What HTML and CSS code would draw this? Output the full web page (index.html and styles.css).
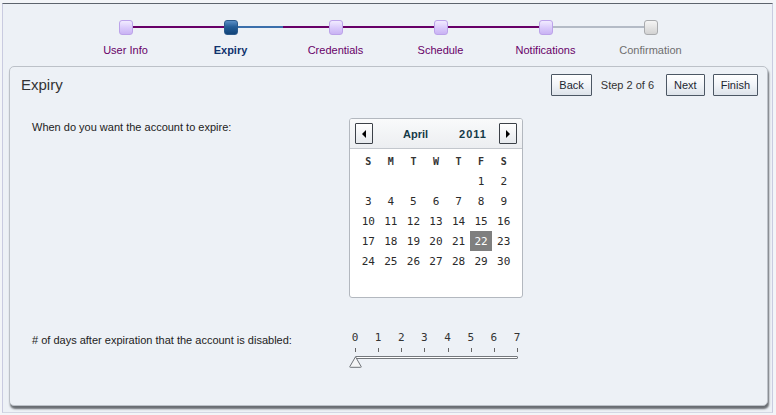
FILE: index.html
```html
<!DOCTYPE html>
<html lang="en">
<head>
<meta charset="utf-8">
<title>Expiry</title>
<link rel="stylesheet" href="styles.css">
</head>
<body>
<div class="frame">
  <ol class="train">
    <li class="step visited rc-purple"><span class="marker"></span><span class="label">User Info</span></li>
    <li class="step current lc-purple rc-blue"><span class="marker"></span><span class="label">Expiry</span></li>
    <li class="step visited lc-purple rc-purple"><span class="marker"></span><span class="label">Credentials</span></li>
    <li class="step visited lc-purple rc-purple"><span class="marker"></span><span class="label">Schedule</span></li>
    <li class="step visited lc-purple rc-gray"><span class="marker"></span><span class="label">Notifications</span></li>
    <li class="step disabled lc-gray"><span class="marker"></span><span class="label">Confirmation</span></li>
  </ol>

  <section class="panel">
    <header class="panel-head">
      <h1 class="panel-title">Expiry</h1>
      <div class="nav">
        <button class="btn" type="button">Back</button>
        <span class="step-count">Step 2 of 6</span>
        <button class="btn" type="button">Next</button>
        <button class="btn" type="button">Finish</button>
      </div>
    </header>

    <div class="form">
      <div class="row">
        <label class="prompt">When do you want the account to expire:</label>
        <div class="calendar">
          <div class="cal-head">
            <button class="cal-btn" type="button" aria-label="Previous month">
              <svg width="6" height="8" viewBox="0 0 6 8"><polygon points="5,0 5,8 1,4" fill="#000"/></svg>
            </button>
            <span class="cal-month">April</span>
            <span class="cal-year">2011</span>
            <button class="cal-btn cal-next" type="button" aria-label="Next month">
              <svg width="6" height="8" viewBox="0 0 6 8"><polygon points="1,0 1,8 5,4" fill="#000"/></svg>
            </button>
          </div>
          <div class="cal-grid">
            <span class="dow">S</span><span class="dow">M</span><span class="dow">T</span><span class="dow">W</span><span class="dow">T</span><span class="dow">F</span><span class="dow">S</span>
            <span></span><span></span><span></span><span></span><span></span><span class="day">1</span><span class="day">2</span>
            <span class="day">3</span><span class="day">4</span><span class="day">5</span><span class="day">6</span><span class="day">7</span><span class="day">8</span><span class="day">9</span>
            <span class="day">10</span><span class="day">11</span><span class="day">12</span><span class="day">13</span><span class="day">14</span><span class="day">15</span><span class="day">16</span>
            <span class="day">17</span><span class="day">18</span><span class="day">19</span><span class="day">20</span><span class="day">21</span><span class="day selected">22</span><span class="day">23</span>
            <span class="day">24</span><span class="day">25</span><span class="day">26</span><span class="day">27</span><span class="day">28</span><span class="day">29</span><span class="day">30</span>
          </div>
        </div>
      </div>

      <div class="row row-slider">
        <label class="prompt prompt-slider"># of days after expiration that the account is disabled:</label>
        <div class="slider">
          <div class="scale">
            <span>0</span><span>1</span><span>2</span><span>3</span><span>4</span><span>5</span><span>6</span><span>7</span>
          </div>
          <div class="ticks">
            <span></span><span></span><span></span><span></span><span></span><span></span><span></span><span></span>
          </div>
          <div class="track-area">
            <div class="track"></div>
            <svg class="thumb" width="13" height="12" viewBox="0 0 13 12"><path d="M6.5 0.8 L12.2 10.6 Q12.5 11.3 11.6 11.3 L1.4 11.3 Q0.5 11.3 0.8 10.6 Z" fill="#f4f5f6" stroke="#6f7378" stroke-width="1"/></svg>
          </div>
        </div>
      </div>
    </div>
  </section>
</div>
</body>
</html>
```

FILE: styles.css
```css
* { box-sizing: border-box; }

html, body {
  margin: 0;
  padding: 0;
  background: #f3f5f8;
}

body {
  padding: 3px 0 0 2px;
  font-family: "Liberation Sans", Arial, sans-serif;
  font-size: 11px;
  color: #222;
}

.frame {
  width: 771px;
  height: 410px;
  background: #edf1f6;
  border-top: 1px solid #5d646d;
  border-left: 1px solid #c9cbe0;
  border-right: 1px solid #c9cbe0;
  border-bottom: 1px solid #d3d7e4;
}

/* ---------- train ---------- */
.train {
  list-style: none;
  margin: 0;
  padding: 16px 0 0 70px;
  display: grid;
  grid-template-columns: repeat(6, 105px);
  height: 62px;
}

.step {
  position: relative;
  display: flex;
  flex-direction: column;
  align-items: center;
}

.step::before,
.step::after {
  content: "";
  position: absolute;
  top: 6px;
  height: 2px;
  width: 50%;
}
.step::before { left: 0; background: var(--lc, transparent); }
.step::after { left: 50%; background: var(--rc, transparent); }

.lc-purple { --lc: #680068; }
.rc-purple { --rc: #680068; }
.rc-blue { --rc: #3b6fab; }
.lc-gray { --lc: #b4bbc6; }
.rc-gray { --rc: #b4bbc6; }

.marker {
  position: relative;
  z-index: 1;
  width: 14px;
  height: 15px;
  border-radius: 3px;
  margin-bottom: 8px;
}

.visited .marker {
  border: 1px solid #bca3ea;
  background: linear-gradient(#f1ebff, #d9c9fb 55%, #c9b3f3);
}
.current .marker {
  border: 1px solid #2c5a8c;
  background: linear-gradient(#5b8fc6, #245d98 45%, #124479);
}
.disabled .marker {
  border: 1px solid #a9abae;
  background: linear-gradient(#f5f5f5, #e0e0e0 60%, #d2d2d2);
}

.label {
  font-size: 11px;
  line-height: 14px;
  white-space: nowrap;
}
.visited .label { color: #680068; }
.current .label { color: #10336e; font-weight: bold; }
.disabled .label { color: #6f6f6f; }

/* ---------- panel ---------- */
.panel {
  margin: 0 4px 0 6px;
  height: 340px;
  border: 1px solid #bcc1c8;
  border-radius: 5px;
  background: #edf1f6;
  box-shadow: 1px 3px 2px rgba(60, 64, 70, 0.75);
}

.panel-head {
  display: flex;
  align-items: center;
  justify-content: space-between;
  padding: 7px 9px 0 11px;
}

.panel-title {
  margin: 0;
  font-size: 15px;
  font-weight: normal;
  color: #333;
  line-height: 22px;
}

.nav {
  display: flex;
  align-items: center;
}

.btn {
  height: 22px;
  padding: 0 7px;
  margin: 0;
  font-family: "Liberation Sans", Arial, sans-serif;
  font-size: 11px;
  color: #1c2631;
  border: 1px solid #4c5764;
  border-radius: 1px;
  background: linear-gradient(#ffffff, #f1f4f8 50%, #dde3ea);
}

.nav .btn + .btn { margin-left: 8px; }

.step-count {
  margin: 0 12px 0 9px;
  color: #333;
}

/* ---------- form ---------- */
.form {
  padding: 22px 0 0 22px;
}

.row {
  display: grid;
  grid-template-columns: 317px 174px;
  align-items: start;
}

.prompt {
  padding-top: 2px;
  line-height: 14px;
  color: #222;
}

/* calendar */
.calendar {
  height: 180px;
  border: 1px solid #b3b8bf;
  border-radius: 3px;
  background: #fff;
  overflow: hidden;
}

.cal-head {
  display: flex;
  align-items: center;
  height: 30px;
  padding: 0 5px;
  border-bottom: 1px solid #c3c7cd;
  background: linear-gradient(#f9fafb, #eceef1);
}

.cal-btn {
  width: 18px;
  height: 21px;
  padding: 0;
  display: flex;
  align-items: center;
  justify-content: center;
  border: 1px solid #3c4148;
  border-radius: 1px;
  background: linear-gradient(#ffffff, #e6e9ed);
}

.cal-month,
.cal-year {
  font-weight: bold;
  color: #153a48;
  font-family: "Liberation Sans", Arial, sans-serif;
  font-size: 11px;
}
.cal-month { margin-left: 30px; }
.cal-year { margin-left: 31px; letter-spacing: 1px; }
.cal-next { margin-left: auto; }

.cal-grid {
  display: grid;
  grid-template-columns: repeat(7, 1fr);
  grid-auto-rows: 20px;
  padding: 2px 7px 0;
  font-family: "DejaVu Sans Mono", "Liberation Mono", monospace;
  font-size: 11px;
  color: #2a2a2a;
}

.cal-grid span {
  display: flex;
  align-items: center;
  justify-content: center;
}

.dow {
  font-weight: bold;
  font-size: 10px;
  color: #333;
}

.selected {
  background: #7f7f7f;
  color: #fff;
}

/* slider */
.row-slider {
  margin-top: 34px;
}

.prompt-slider { padding-top: 1px; }

.slider {
  width: 174px;
}

.scale,
.ticks {
  display: flex;
  justify-content: space-between;
}

.scale span {
  width: 12px;
  text-align: center;
  font-family: "DejaVu Sans Mono", "Liberation Mono", monospace;
  font-size: 11px;
  line-height: 12px;
  color: #333;
}

.ticks {
  margin-top: 4px;
  padding: 0 5px 0 6px;
}
.ticks span {
  width: 1px;
  height: 4px;
  background: #666;
}

.track-area {
  position: relative;
  height: 12px;
  margin-top: 1px;
}

.track {
  margin: 4px 0 0 6px;
  width: 163px;
  height: 3px;
  border: 1px solid #74787d;
  border-radius: 1px;
  background: #fff;
}

.thumb {
  position: absolute;
  left: 0;
  top: 0;
}
```
